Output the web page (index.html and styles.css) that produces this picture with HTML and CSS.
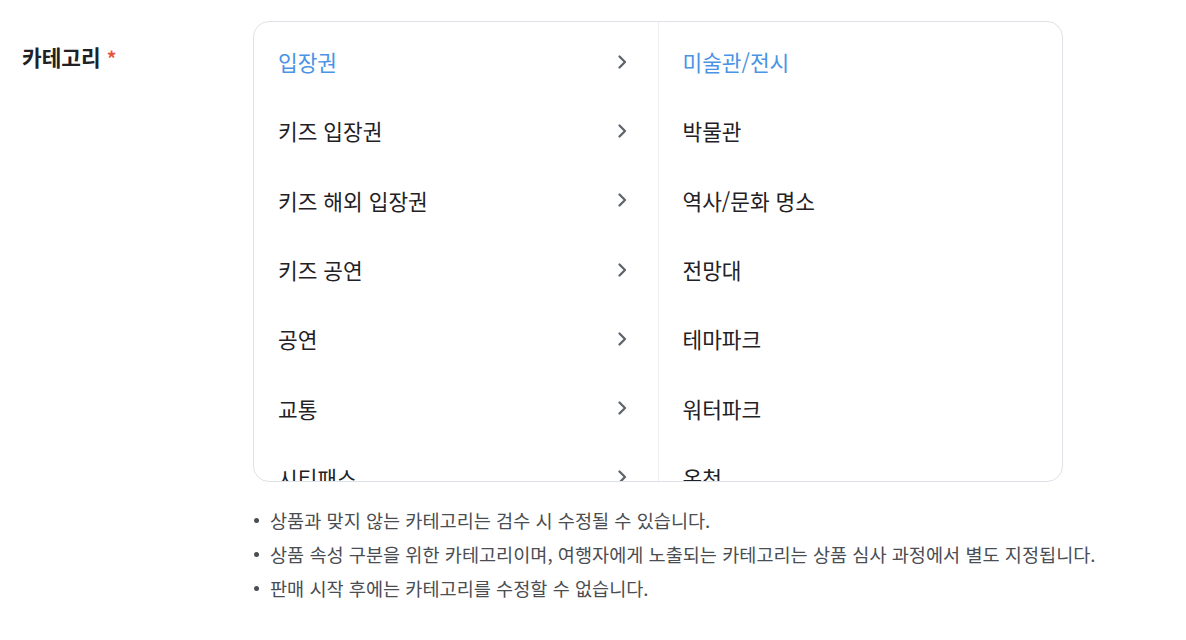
FILE: index.html
```html
<!DOCTYPE html>
<html lang="ko">
<head>
    <meta charset="UTF-8">
    <title>카테고리</title>
    <link rel="stylesheet" href="styles.css">
</head>
<body>
    <div class="field-row">
        <div class="field-label">카테고리 <span class="required">*</span></div>
        <div class="field-body">
            <div class="category-box">
                <ul class="category-col depth1">
                    <li class="active"><span>입장권</span><svg class="chev" viewBox="0 0 12 16"><path d="M3.5 2.5l5.5 5.5-5.5 5.5"/></svg></li>
                    <li><span>키즈 입장권</span><svg class="chev" viewBox="0 0 12 16"><path d="M3.5 2.5l5.5 5.5-5.5 5.5"/></svg></li>
                    <li><span>키즈 해외 입장권</span><svg class="chev" viewBox="0 0 12 16"><path d="M3.5 2.5l5.5 5.5-5.5 5.5"/></svg></li>
                    <li><span>키즈 공연</span><svg class="chev" viewBox="0 0 12 16"><path d="M3.5 2.5l5.5 5.5-5.5 5.5"/></svg></li>
                    <li><span>공연</span><svg class="chev" viewBox="0 0 12 16"><path d="M3.5 2.5l5.5 5.5-5.5 5.5"/></svg></li>
                    <li><span>교통</span><svg class="chev" viewBox="0 0 12 16"><path d="M3.5 2.5l5.5 5.5-5.5 5.5"/></svg></li>
                    <li><span>시티패스</span><svg class="chev" viewBox="0 0 12 16"><path d="M3.5 2.5l5.5 5.5-5.5 5.5"/></svg></li>
                </ul>
                <ul class="category-col depth2">
                    <li class="active"><span>미술관/전시</span></li>
                    <li><span>박물관</span></li>
                    <li><span>역사/문화 명소</span></li>
                    <li><span>전망대</span></li>
                    <li><span>테마파크</span></li>
                    <li><span>워터파크</span></li>
                    <li><span>온천</span></li>
                </ul>
            </div>
            <ul class="notes">
                <li>상품과 맞지 않는 카테고리는 검수 시 수정될 수 있습니다.</li>
                <li>상품 속성 구분을 위한 카테고리이며, 여행자에게 노출되는 카테고리는 상품 심사 과정에서 별도 지정됩니다.</li>
                <li>판매 시작 후에는 카테고리를 수정할 수 없습니다.</li>
            </ul>
        </div>
    </div>
</body>
</html>
```

FILE: styles.css
```css
body {
    margin: 0;
    background: #fff;
    color: #1f2125;
    font-family: "Noto Sans CJK KR", "Noto Sans", sans-serif;
}
.field-row {
    display: flex;
    padding: 21px 0 0 22px;
}
.field-label {
    width: 231px;
    flex-shrink: 0;
    font-size: 21.4px;
    font-weight: 700;
    line-height: 28px;
    padding-top: 22px;
    color: #1f2125;
}
.required {
    color: #e5533d;
    font-size: 19px;
}
.field-body {
    width: 810px;
}
.category-box {
    display: flex;
    height: 459px;
    border: 1px solid #dee1e6;
    border-radius: 16px;
    overflow: hidden;
}
.category-col {
    list-style: none;
    margin: 0;
    padding: 5px 0 0 0;
    flex: 1;
}
.depth1 {
    border-right: 1px solid #eceef1;
}
.category-col li {
    display: flex;
    align-items: center;
    justify-content: space-between;
    height: 69.3px;
    padding: 0 30px 0 24px;
    font-size: 21.4px;
    color: #1f2125;
}
.category-col li.active {
    color: #4a93e5;
}
.chev {
    width: 12px;
    height: 16px;
    fill: none;
    stroke: #5f646b;
    stroke-width: 2.3;
    stroke-linecap: round;
    stroke-linejoin: round;
}
.notes {
    list-style: none;
    margin: 0;
    padding: 21px 0 0 0;
    white-space: nowrap;
}
.notes li {
    position: relative;
    padding-left: 17px;
    font-size: 18.6px;
    line-height: 34px;
    color: #4a4d52;
}
.notes li::before {
    content: "";
    position: absolute;
    left: 1px;
    top: 15px;
    width: 5px;
    height: 5px;
    border-radius: 50%;
    background: #4a4d52;
}
```
